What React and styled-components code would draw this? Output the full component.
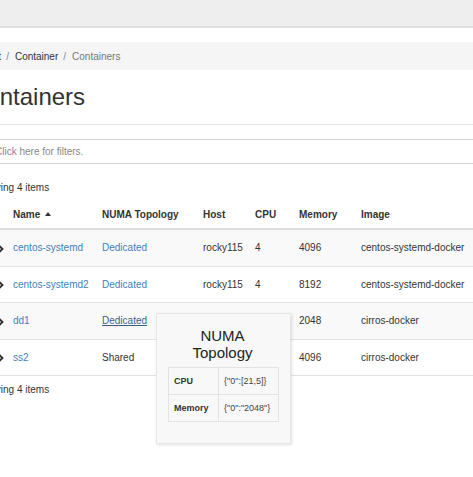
import React from 'react'
import styled, { createGlobalStyle } from 'styled-components'

const Global = createGlobalStyle`
  html, body {
    margin: 0;
    padding: 0;
    background: #fff;
    overflow: hidden;
  }
  body {
    font-family: "Liberation Sans", Arial, sans-serif;
    font-size: 10px;
    color: #333;
  }
`

const rows = [
    { name: 'centos-systemd', numa: 'Dedicated', host: 'rocky115', cpu: '4', mem: '4096', image: 'centos-systemd-docker' },
    { name: 'centos-systemd2', numa: 'Dedicated', host: 'rocky115', cpu: '4', mem: '8192', image: 'centos-systemd-docker' },
    { name: 'dd1', numa: 'Dedicated', hover: true, host: '', cpu: '', mem: '2048', image: 'cirros-docker' },
    { name: 'ss2', numa: 'Shared', host: '', cpu: '', mem: '4096', image: 'cirros-docker' },
]

function Chevron() {
    return (
        <svg width="6" height="8" viewBox="0 0 6 8">
            <polyline points="1,0.8 4.4,4 1,7.2" fill="none" stroke="#333" strokeWidth="2" />
        </svg>
    )
}

function SortUp() {
    return (
        <svg width="6" height="4" viewBox="0 0 6 4">
            <polygon points="0,4 3,0 6,4" fill="#333" />
        </svg>
    )
}

function App() {
    return (
        <Page>
            <Global />
            <TopBar />
            <Content>
                <Breadcrumb>
                    <Crumb>Project</Crumb>
                    <Crumb sep>Container</Crumb>
                    <Crumb sep active>Containers</Crumb>
                </Breadcrumb>
                <Title>Containers</Title>
                <Rule />
                <FilterBox>Click here for filters.</FilterBox>
                <Count>Displaying 4 items</Count>
                <Table>
                    <colgroup>
                        <col style={{ width: 37 }} />
                        <col style={{ width: 89 }} />
                        <col style={{ width: 101 }} />
                        <col style={{ width: 52 }} />
                        <col style={{ width: 44 }} />
                        <col style={{ width: 62 }} />
                        <col style={{ width: 125 }} />
                    </colgroup>
                    <thead>
                        <tr>
                            <Th />
                            <Th>Name<SortUp /></Th>
                            <Th>NUMA Topology</Th>
                            <Th>Host</Th>
                            <Th>CPU</Th>
                            <Th>Memory</Th>
                            <Th>Image</Th>
                        </tr>
                    </thead>
                    <tbody>
                        {rows.map((r, i) => (
                            <Row key={r.name} striped={i % 2 === 0}>
                                <ToggleCell><Chevron /></ToggleCell>
                                <Td><Link>{r.name}</Link></Td>
                                <Td>
                                    {r.numa === 'Shared'
                                        ? r.numa
                                        : <Link hover={r.hover}>{r.numa}</Link>}
                                </Td>
                                <Td>{r.host}</Td>
                                <Td>{r.cpu}</Td>
                                <Td>{r.mem}</Td>
                                <Td>{r.image}</Td>
                            </Row>
                        ))}
                    </tbody>
                    <tfoot>
                        <tr>
                            <FootCell colSpan={7}>Displaying 4 items</FootCell>
                        </tr>
                    </tfoot>
                </Table>
            </Content>
            <Popover>
                <PopTitle>NUMA Topology</PopTitle>
                <PopTable>
                    <tbody>
                        <tr>
                            <PopKey>CPU</PopKey>
                            <PopVal>{'{"0":[21,5]}'}</PopVal>
                        </tr>
                        <tr>
                            <PopKey>Memory</PopKey>
                            <PopVal>{'{"0":"2048"}'}</PopVal>
                        </tr>
                    </tbody>
                </PopTable>
            </Popover>
        </Page>
    )
}

export default App

const Page = styled.div`
    position: relative;
    width: 473px;
    height: 477px;
    overflow: hidden;
`

const TopBar = styled.div`
    height: 26px;
    background: #eeeeee;
    border-bottom: 2px solid #dedede;
`

const Content = styled.div`
    margin-left: -32px;
    width: 520px;
`

const Breadcrumb = styled.div`
    margin-top: 14px;
    height: 28px;
    background: #f5f5f5;
    display: flex;
    align-items: center;
    padding-left: 2px;
    font-size: 10px;
`

const Crumb = styled.span`
    color: ${p => (p.active ? '#777' : '#333')};
    &::before {
        content: ${p => (p.sep ? '"/"' : 'none')};
        color: #888;
        padding: 0 6px 0 5px;
    }
`

const Title = styled.h1`
    margin: 13px 0 0 1px;
    font-size: 24px;
    line-height: 28px;
    font-weight: normal;
    color: #333;
`

const Rule = styled.div`
    margin-top: 13px;
    border-top: 1px solid #e3e3e3;
`

const FilterBox = styled.div`
    margin-top: 14px;
    height: 23px;
    border-top: 1px solid #d6d6d6;
    border-bottom: 1px solid #d6d6d6;
    display: flex;
    align-items: center;
    padding-left: 27px;
    color: #888;
    font-size: 10px;
`

const Count = styled.div`
    margin-top: 17px;
    line-height: 14px;
    font-size: 10px;
`

const Table = styled.table`
    margin-top: 5px;
    border-collapse: collapse;
    table-layout: fixed;
    width: 510px;
    font-size: 10px;
`

const Th = styled.th`
    height: 28px;
    padding: 0 8px;
    text-align: left;
    font-weight: bold;
    border-bottom: 2px solid #dddddd;
    white-space: nowrap;
    svg {
        margin-left: 5px;
        vertical-align: 2px;
    }
`

const Row = styled.tr`
    background: ${p => (p.striped ? '#f9f9f9' : '#ffffff')};
`

const Td = styled.td`
    height: 35.5px;
    padding: 0 8px;
    border-top: 1px solid #e2e2e2;
    white-space: nowrap;
`

const ToggleCell = styled(Td)`
    padding: 0 1px 0 0;
    text-align: right;
    svg {
        display: inline-block;
        vertical-align: middle;
    }
`

const Link = styled.a`
    color: ${p => (p.hover ? '#3b5f84' : '#3d7fc0')};
    text-decoration: ${p => (p.hover ? 'underline' : 'none')};
    cursor: pointer;
`

const FootCell = styled.td`
    border-top: 1px solid #e2e2e2;
    padding: 0;
    height: 26px;
    text-align: left;
`

const Popover = styled.div`
    position: absolute;
    left: 156px;
    top: 313px;
    width: 135px;
    box-sizing: border-box;
    padding: 13px 13px 21px 11px;
    background: #f8f8f8;
    border: 1px solid #e6e6e6;
    box-shadow: 1px 1px 3px rgba(0, 0, 0, 0.12);
`

const PopTitle = styled.div`
    padding: 0 20px;
    text-align: center;
    font-size: 15px;
    line-height: 17px;
    color: #222;
`

const PopTable = styled.table`
    margin-top: 6px;
    width: 111px;
    border-collapse: collapse;
    table-layout: fixed;
    font-size: 9px;
`

const PopKey = styled.td`
    width: 50px;
    height: 26px;
    box-sizing: border-box;
    padding: 0 5px;
    border: 1px solid #e3e3e3;
    font-weight: bold;
`

const PopVal = styled.td`
    height: 26px;
    padding: 0 5px;
    border: 1px solid #e3e3e3;
    white-space: nowrap;
    color: #444;
`
